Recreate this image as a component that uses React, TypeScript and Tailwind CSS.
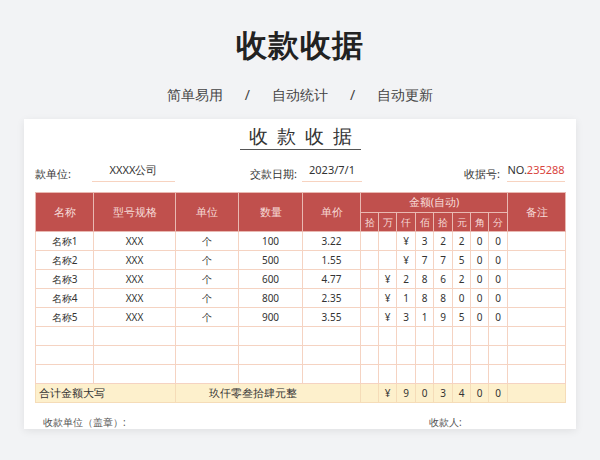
const digitHeads = ["拾", "万", "仟", "佰", "拾", "元", "角", "分"]

const rows = [
  { name: "名称1", spec: "XXX", unit: "个", qty: "100", price: "3.22", d: ["", "", "¥", "3", "2", "2", "0", "0"] },
  { name: "名称2", spec: "XXX", unit: "个", qty: "500", price: "1.55", d: ["", "", "¥", "7", "7", "5", "0", "0"] },
  { name: "名称3", spec: "XXX", unit: "个", qty: "600", price: "4.77", d: ["", "¥", "2", "8", "6", "2", "0", "0"] },
  { name: "名称4", spec: "XXX", unit: "个", qty: "800", price: "2.35", d: ["", "¥", "1", "8", "8", "0", "0", "0"] },
  { name: "名称5", spec: "XXX", unit: "个", qty: "900", price: "3.55", d: ["", "¥", "3", "1", "9", "5", "0", "0"] },
]

const colW = [58, 82, 63, 64, 58, 18, 18, 19, 18, 19, 18, 18, 19, 58]

const serif = "font-['Liberation_Serif','Noto_Sans_CJK_SC',serif]"
const cell = "border border-[#f5d3c2] text-center h-[19px] p-0"

export default function App() {
  return (
    <div className="w-[600px] h-[460px] overflow-hidden bg-[#f2f3f5] flex flex-col items-center font-['Noto_Sans_CJK_SC',sans-serif]">
      <h1 className="mt-[24px] text-[31px] leading-[40px] font-bold text-[#222] tracking-[1px]">收款收据</h1>
      <div className="mt-[21px] flex gap-[22px] text-[14px] text-[#444] leading-[20px]">
        <span>简单易用</span>
        <span>/</span>
        <span>自动统计</span>
        <span>/</span>
        <span>自动更新</span>
      </div>

      <div className={`mt-[14px] w-[552px] h-[310px] bg-white shadow-[0_2px_8px_rgba(0,0,0,0.08)] px-[11px] ${serif} text-[#333]`}>
        <div className="flex justify-center pt-[4px]">
          <span className="text-[19px] leading-[26px] tracking-[9px] pl-[9px] border-b-[1.5px] border-[#555]">收款收据</span>
        </div>

        <div className="flex items-end text-[11px] h-[30px] mt-[2px]">
          <span className="w-[57px]">款单位:</span>
          <span className="w-[83px] text-center border-b border-[#f7d3c0] pb-[3px]">XXXX公司</span>
          <span className="w-[75px]" />
          <span className="w-[52px]">交款日期:</span>
          <span className="w-[60px] text-center border-b border-[#f7d3c0] pb-[3px]">2023/7/1</span>
          <span className="flex-1" />
          <span className="w-[43px]">收据号:</span>
          <span className="w-[58px] text-center border-b border-[#f7d3c0] pb-[3px]">
            NO.<span className="text-[#d9443c]">235288</span>
          </span>
        </div>

        <table className="mt-[10px] w-[530px] table-fixed border-collapse text-[10px]">
          <colgroup>
            {colW.map((w, i) => (
              <col key={i} style={{ width: w }} />
            ))}
          </colgroup>
          <thead className="bg-[#c0504d] text-[#f7dcd9]">
            <tr className="h-[20px]">
              {["名称", "型号规格", "单位", "数量", "单价"].map((h) => (
                <th key={h} rowSpan={2} className="border border-[#e9b9b2] font-normal text-[11px]">{h}</th>
              ))}
              <th colSpan={8} className="border border-[#e9b9b2] font-normal text-[11px]">金额(自动)</th>
              <th rowSpan={2} className="border border-[#e9b9b2] font-normal text-[11px]">备注</th>
            </tr>
            <tr className="h-[19px]">
              {digitHeads.map((h, i) => (
                <th key={i} className="border border-[#e9b9b2] font-normal text-[10px]">{h}</th>
              ))}
            </tr>
          </thead>
          <tbody>
            {rows.map((r) => (
              <tr key={r.name}>
                <td className={cell}>{r.name}</td>
                <td className={cell}>{r.spec}</td>
                <td className={cell}>{r.unit}</td>
                <td className={cell}>{r.qty}</td>
                <td className={cell}>{r.price}</td>
                {r.d.map((v, i) => (
                  <td key={i} className={cell}>{v}</td>
                ))}
                <td className={cell} />
              </tr>
            ))}
            {[0, 1, 2].map((k) => (
              <tr key={k}>
                {colW.map((_, i) => (
                  <td key={i} className={cell} />
                ))}
              </tr>
            ))}
            <tr className="bg-[#fdf0cc]">
              <td colSpan={2} className="border border-[#f5dcb8] h-[19px] text-left pl-[3px] text-[11px]">合计金额大写</td>
              <td colSpan={3} className="border border-[#f5dcb8] text-center text-[11px] pr-[30px]">玖仟零叁拾肆元整</td>
              {["", "¥", "9", "0", "3", "4", "0", "0"].map((v, i) => (
                <td key={i} className="border border-[#f5dcb8] text-center">{v}</td>
              ))}
              <td className="border border-[#f5dcb8]" />
            </tr>
          </tbody>
        </table>

        <div className="flex text-[10px] text-[#555] mt-[12px] px-[8px]">
          <span className="w-[386px]">收款单位（盖章）:</span>
          <span>收款人:</span>
        </div>
      </div>
    </div>
  )
}
